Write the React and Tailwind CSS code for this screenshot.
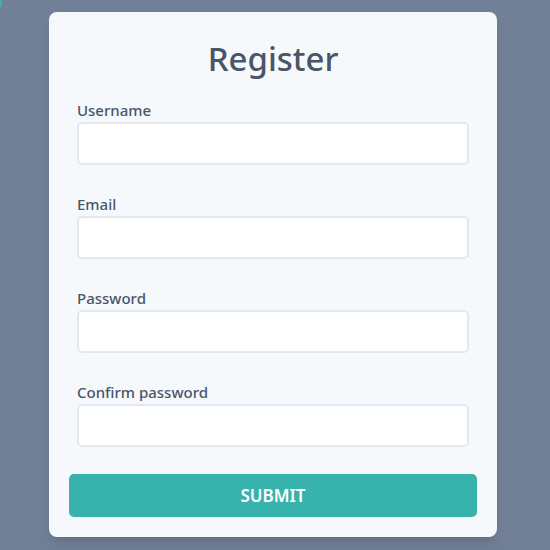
const fields = [
  { id: "username", label: "Username", type: "text" },
  { id: "email", label: "Email", type: "email" },
  { id: "password", label: "Password", type: "password" },
  { id: "confirm", label: "Confirm password", type: "password" },
];

const App = () => {
  return (
    <div
      className="relative min-h-screen bg-[#718096] pt-3"
      style={{ fontFamily: '"Noto Sans", "Open Sans", sans-serif' }}
    >
      <div className="absolute left-0 top-0 h-[7px] w-[2px] bg-[#38b2ac]" />
      <form className="ml-[49px] w-[448px] rounded-lg bg-[#f5f9fc] px-5 pb-5 pt-[27px] shadow-lg">
        <h1 className="mb-[21px] text-center text-[33px] font-medium leading-[40px] text-[#4a5568]">Register</h1>
        <div className="px-2">
          {fields.map((f) => (
            <div key={f.id} className="mb-[29px] last:mb-[27px]">
              <label
                htmlFor={f.id}
                className="mb-[2px] block text-[15px] font-medium leading-[20px] text-[#4a5568]"
              >
                {f.label}
              </label>
              <input
                id={f.id}
                type={f.type}
                className="block h-[43px] w-full rounded-[5px] border-2 border-[#e2e8f0] bg-white px-3 outline-none"
              />
            </div>
          ))}
        </div>
        <button
          type="button"
          className="block h-[43px] w-full rounded-[5px] bg-[#38b2ac] text-[17px] font-semibold text-white"
        >
          SUBMIT
        </button>
      </form>
    </div>
  );
};

export default App;
